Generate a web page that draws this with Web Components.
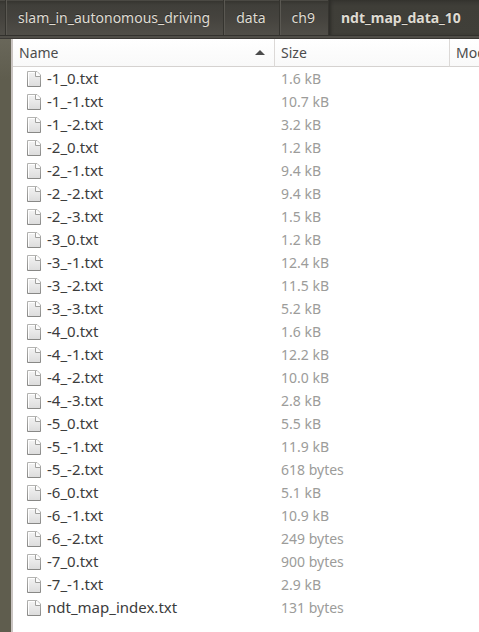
<!DOCTYPE html>
<html lang="en">
<head>
<meta charset="utf-8">
<title>ndt_map_data_10</title>
<style>
html, body { margin: 0; height: 100%; }
body { font-family: "Noto Sans", "Open Sans", sans-serif; font-size: 14px; color: #3c3c3c; background: #fff; }
</style>
</head>
<body>
<file-window>
  <path-bar slot="path">
    <path-crumb>slam_in_autonomous_driving</path-crumb>
    <path-crumb>data</path-crumb>
    <path-crumb>ch9</path-crumb>
    <path-crumb current>ndt_map_data_10</path-crumb>
  </path-bar>
  <file-list></file-list>
</file-window>
<script>
class FileWindow extends HTMLElement {
  constructor() {
    super();
    this.attachShadow({ mode: "open" }).innerHTML = `
      <style>
        :host { display: flex; flex-direction: column; min-height: 100vh; overflow: hidden; }
        .body { flex: 1; display: flex; }
        .side { flex: none; width: 11px; background: linear-gradient(#69675a, #5f5d4e 40px); border-right: 2px solid #c9c4c1; }
        main { flex: 1; min-width: 0; background: #fff; }
      </style>
      <slot name="path"></slot>
      <div class="body"><div class="side"></div><main><slot></slot></main></div>`;
  }
}
class PathBar extends HTMLElement {
  constructor() {
    super();
    this.attachShadow({ mode: "open" }).innerHTML = `
      <style>
        :host { display: block; flex: none; background: #504e48; border-bottom: 1px solid #3a3834; }
        nav { display: flex; height: 35px; padding-left: 5px; margin-bottom: 2px;
              background: linear-gradient(#5e5c56 0, #363530 1px, #403f3a 5px, #45433e 18px, #504e48 100%);
              border-bottom: 1px solid #32312d; }
      </style>
      <nav aria-label="Path"><slot></slot></nav>`;
  }
}
class PathCrumb extends HTMLElement {
  constructor() {
    super();
    this.attachShadow({ mode: "open" }).innerHTML = `
      <style>
        :host { display: flex; border-left: 1px solid #35342f; box-shadow: inset 1px 0 #5a5852; }
        :host([current]) { flex: 1; background: linear-gradient(#363530, #3f3e38 6px, #403f39); box-shadow: inset 3px 0 3px -1px #2e2d29; }
        button { all: unset; box-sizing: border-box; padding: 0 13px 0 12px; line-height: 35px; white-space: nowrap; color: #dfdbd2; text-shadow: 0 -1px #2c2b28; }
        :host([current]) button { font-weight: 700; }
      </style>
      <button type="button"><slot></slot></button>`;
  }
}
class DocIcon extends HTMLElement {
  constructor() {
    super();
    this.attachShadow({ mode: "open" }).innerHTML = `
      <style>:host { display: block; flex: none; width: 14px; height: 16px; } svg { display: block; }</style>
      <svg width="14" height="16" viewBox="0 0 14 16" aria-hidden="true">
        <defs>
          <linearGradient id="fill" x2="0" y2="1"><stop stop-color="#f4f4f4"/><stop offset="1" stop-color="#dcdcdc"/></linearGradient>
          <linearGradient id="edge" x2="0" y2="1"><stop stop-color="#b4b4b2"/><stop offset="1" stop-color="#888886"/></linearGradient>
        </defs>
        <path d="M.5.5h9.500l3.500 3.500v11.500H.5z" fill="url(#fill)" stroke="url(#edge)"/>
        <path d="M1.500 14.500v-13h7" fill="none" stroke="#fff"/>
        <path d="M9 1h1l3 3v1H9z" fill="#fcfcfc"/>
        <path d="M8.500 1v4.500h4.500" fill="none" stroke="#a0a09e"/>
      </svg>`;
  }
}
const files = [
  ["-1_0.txt", "1.6 kB"], ["-1_-1.txt", "10.7 kB"], ["-1_-2.txt", "3.2 kB"],
  ["-2_0.txt", "1.2 kB"], ["-2_-1.txt", "9.4 kB"], ["-2_-2.txt", "9.4 kB"], ["-2_-3.txt", "1.5 kB"],
  ["-3_0.txt", "1.2 kB"], ["-3_-1.txt", "12.4 kB"], ["-3_-2.txt", "11.5 kB"], ["-3_-3.txt", "5.2 kB"],
  ["-4_0.txt", "1.6 kB"], ["-4_-1.txt", "12.2 kB"], ["-4_-2.txt", "10.0 kB"], ["-4_-3.txt", "2.8 kB"],
  ["-5_0.txt", "5.5 kB"], ["-5_-1.txt", "11.9 kB"], ["-5_-2.txt", "618 bytes"],
  ["-6_0.txt", "5.1 kB"], ["-6_-1.txt", "10.9 kB"], ["-6_-2.txt", "249 bytes"],
  ["-7_0.txt", "900 bytes"], ["-7_-1.txt", "2.9 kB"], ["ndt_map_index.txt", "131 bytes"]
];
class FileList extends HTMLElement {
  constructor() {
    super();
    this.attachShadow({ mode: "open" }).innerHTML = `
      <style>
        :host { display: block; }
        table { width: 100%; table-layout: fixed; border-collapse: separate; border-spacing: 0; }
        col.name { width: 262px; } col.size { width: 175px; }
        th, td { padding: 0 6px; text-align: left; font-weight: 400; white-space: nowrap; overflow: hidden; }
        th { box-sizing: border-box; height: 28px; color: #4c4c4c; background: linear-gradient(#fff, #f9f9f9); border-right: 1px solid #dcd9d7; border-bottom: 1px solid #d5d2d0; }
        th:last-child { border-right: 0; padding-right: 0; }
        th div { display: flex; align-items: center; justify-content: space-between; }
        th svg { margin-right: 3px; }
        td { height: 23px; line-height: 23px; color: #9c9c9a; }
        td:first-child { padding-left: 14px; font-size: 15px; color: #3c3c3c; }
        td div { display: flex; align-items: center; gap: 6px; }
      </style>
      <table>
        <colgroup><col class="name"><col class="size"><col></colgroup>
        <thead><tr>
          <th scope="col" aria-sort="ascending"><div>Name<svg width="10" height="5" viewBox="0 0 10 5" aria-hidden="true"><path d="M0 5 5 0l5 5z" fill="#4c4c4c"/></svg></div></th>
          <th scope="col">Size</th><th scope="col">Modified</th>
        </tr></thead>
        <tbody>${files.map(([n, s]) => `<tr><td><div><doc-icon></doc-icon><span>${n}</span></div></td><td>${s}</td><td></td></tr>`).join("")}</tbody>
      </table>`;
  }
}
customElements.define("doc-icon", DocIcon);
customElements.define("path-crumb", PathCrumb);
customElements.define("path-bar", PathBar);
customElements.define("file-list", FileList);
customElements.define("file-window", FileWindow);
</script>
</body>
</html>
